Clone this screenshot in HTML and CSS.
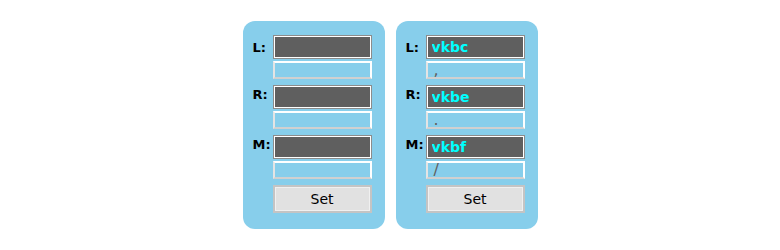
FILE: index.html
```html
<!DOCTYPE html>
<html lang="en">
<head>
  <meta charset="UTF-8">
  <title>Key Mapping</title>
  <link rel="stylesheet" href="styles.css">
</head>
<body>

  <div class="paineis">

    <form class="painel">
      <div class="linha">
        <label>L:</label>
        <div class="campos">
          <input class="tecla" type="text" readonly>
          <div class="simbolo"></div>
        </div>
      </div>
      <div class="linha">
        <label>R:</label>
        <div class="campos">
          <input class="tecla" type="text" readonly>
          <div class="simbolo"></div>
        </div>
      </div>
      <div class="linha">
        <label>M:</label>
        <div class="campos">
          <input class="tecla" type="text" readonly>
          <div class="simbolo"></div>
        </div>
      </div>
      <button type="button">Set</button>
    </form>

    <form class="painel">
      <div class="linha">
        <label>L:</label>
        <div class="campos">
          <input class="tecla" type="text" value="vkbc" readonly>
          <div class="simbolo">,</div>
        </div>
      </div>
      <div class="linha">
        <label>R:</label>
        <div class="campos">
          <input class="tecla" type="text" value="vkbe" readonly>
          <div class="simbolo">.</div>
        </div>
      </div>
      <div class="linha">
        <label>M:</label>
        <div class="campos">
          <input class="tecla" type="text" value="vkbf" readonly>
          <div class="simbolo">/</div>
        </div>
      </div>
      <button type="button">Set</button>
    </form>

  </div>

</body>
</html>
```

FILE: styles.css
```css
body {
  margin: 0;
  font-family: "DejaVu Sans", Verdana, sans-serif;
  background-color: #fff;
}

.paineis {
  display: flex;
  justify-content: center;
  gap: 11px;
  padding-top: 21px;
}

.painel {
  display: flex;
  flex-direction: column;
  gap: 6px;
  width: 142px;
  box-sizing: border-box;
  padding: 14px 13px 16px 10px;
  background-color: #87ceeb;
  border-radius: 12px;
}

.linha {
  display: flex;
  align-items: flex-start;
}

label {
  width: 20px;
  padding-top: 2px;
  font-size: 13px;
  font-weight: bold;
  line-height: 15px;
  color: #000;
}

.linha:first-child label {
  padding-top: 5px;
}

.campos {
  display: flex;
  flex-direction: column;
  gap: 2px;
  width: 99px;
}

input {
  box-sizing: border-box;
  margin: 0;
  font-family: "DejaVu Sans", Verdana, sans-serif;
  outline: none;
}

.tecla {
  width: 97px;
  height: 22px;
  margin: 1px;
  padding: 0 4px;
  background-color: #5f5f5f;
  border: 1px solid #fff;
  box-shadow: 0 0 0 1px #8c8c8c;
  color: #00ffff;
  font-size: 14px;
  font-weight: bold;
}

.simbolo {
  box-sizing: border-box;
  width: 99px;
  height: 18px;
  padding: 0 6px;
  overflow: hidden;
  background-color: #87ceeb;
  border: 2px solid #fff;
  border-left-color: #e4e4e4;
  border-bottom-color: #d0d0d0;
  color: #606060;
  font-size: 16px;
  line-height: 13px;
}

button {
  align-self: flex-end;
  width: 99px;
  height: 28px;
  padding: 0;
  background-color: #e1e1e1;
  border: 2px solid #c4c4c4;
  box-shadow: inset 0 0 0 1px #f0f0f0;
  color: #000;
  font-family: "DejaVu Sans", Verdana, sans-serif;
  font-size: 14px;
  cursor: pointer;
}
```
